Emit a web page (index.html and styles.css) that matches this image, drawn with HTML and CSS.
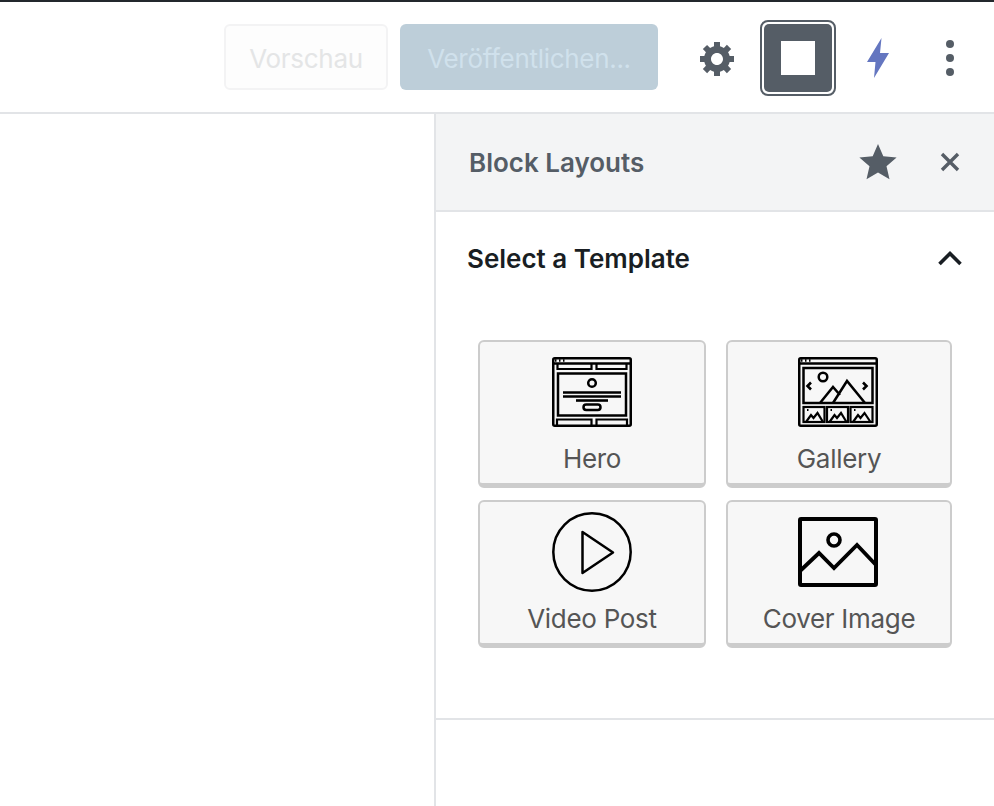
FILE: index.html
```html
<!DOCTYPE html>
<html lang="de">
<head>
<meta charset="utf-8">
<title>Block Layouts</title>
<link rel="stylesheet" href="styles.css">
</head>
<body>
<div class="app">
  <header class="topbar">
    <button class="btn btn-preview">Vorschau</button>
    <button class="btn btn-publish">Veröffentlichen...</button>
    <span class="tool tool-gear">
      <svg width="40" height="40" viewBox="0 0 20 20"><path fill="#555d66" d="M18 12h-2.18c-.17.7-.44 1.35-.81 1.93l1.54 1.54-2.1 2.1-1.54-1.54c-.58.36-1.23.63-1.91.79V19H8v-2.18c-.68-.16-1.33-.43-1.91-.79l-1.54 1.54-2.12-2.12 1.54-1.54c-.36-.58-.63-1.23-.79-1.91H1V9.03h2.17c.16-.7.44-1.35.8-1.94L2.43 5.55l2.1-2.1 1.54 1.54c.58-.37 1.24-.64 1.93-.81V2h3v2.18c.68.16 1.33.43 1.91.79l1.54-1.54 2.12 2.12-1.54 1.54c.36.59.64 1.24.8 1.94H18V12zm-8.5 1.5c1.66 0 3-1.34 3-3s-1.34-3-3-3-3 1.34-3 3 1.34 3 3 3z"/></svg>
    </span>
    <span class="tool-active"><span class="tool-active-inner"><span class="square"></span></span></span>
    <span class="tool tool-bolt">
      <svg width="24" height="42" viewBox="0 0 24 42"><path fill="#6476c0" d="M15.500 1 1 25h8.500L8 41 23 16h-9z"/></svg>
    </span>
    <span class="tool tool-dots">
      <svg width="8" height="36" viewBox="0 0 8 36"><circle cx="4" cy="4" r="4" fill="#555d66"/><circle cx="4" cy="18" r="4" fill="#555d66"/><circle cx="4" cy="32" r="4" fill="#555d66"/></svg>
    </span>
  </header>
  <div class="body">
    <main class="canvas"></main>
    <aside class="sidebar">
      <div class="panel-head">
        <h2 class="panel-title">Block Layouts</h2>
        <svg class="star" width="38" height="38" viewBox="0 0 38 38"><path fill="#555d66" d="M19 1l5.300 12.300 13.300 1.200-10.100 8.800 3 13L19 29.400 7.500 36.300l3-13L.4 14.500l13.300-1.200z"/></svg>
        <svg class="close" width="22" height="22" viewBox="0 0 22 22"><path fill="none" stroke="#555d66" stroke-width="3.400" d="M3 3l16 16M19 3L3 19"/></svg>
      </div>
      <section class="section">
        <div class="section-head">
          <h3 class="section-title">Select a Template</h3>
          <svg width="26" height="16" viewBox="0 0 26 16"><path fill="none" stroke="#191e23" stroke-width="3.600" d="M2.500 14 13 3.500 23.500 14"/></svg>
        </div>
        <div class="grid">
          <button class="card">
            <svg class="card-icon" width="80" height="70" viewBox="0 0 80 70" fill="none" stroke="#000" stroke-width="2.500">
              <rect x="1.250" y="1.250" width="77.500" height="67.500" rx="1.500" stroke-width="2.500"/>
              <path d="M1 6.500h78" />
              <path d="M5.500 6v6h34V6M44.500 6v6h30V6" stroke-width="2.200"/>
              <path d="M5 61.500V70M5 62.500h34.500V69M44.500 69v-6.500H75V69" stroke-width="2.200"/>
              <rect x="6" y="16.500" width="68" height="42"/>
              <circle cx="40" cy="26" r="3.800"/>
              <path d="M11 35.500h58M11 39.500h58"/>
              <path d="M24 43.500h32" stroke-width="2.600"/>
              <rect x="31.500" y="47.500" width="17" height="5.500" rx="2.700"/>
              <path d="M3 3.500h1.500M7 3.500h1.500M11 3.500h1.500" stroke-width="2.400"/>
            </svg>
            <span class="card-label">Hero</span>
          </button>
          <button class="card">
            <svg class="card-icon" width="80" height="70" viewBox="0 0 80 70" fill="none" stroke="#000" stroke-width="2.500">
              <rect x="1.250" y="1.250" width="77.500" height="67.500" rx="1.500"/>
              <path d="M1 6.500h78"/>
              <path d="M3 3.500h1.500M7 3.500h1.500M11 3.500h1.500" stroke-width="2.400"/>
              <rect x="5.500" y="11" width="69" height="35"/>
              <circle cx="25" cy="20" r="4.300"/>
              <path d="M13 25.500 9.500 29l3.500 3.500M65 25.500l3.500 3.500L65 32.500" stroke-width="2.600"/>
              <path d="M22 46 35 30l7 8M35 46l14-22 18 22"/>
              <rect x="5.500" y="50" width="21" height="15" stroke-width="2.200"/>
              <rect x="29" y="50" width="21" height="15" stroke-width="2.200"/>
              <rect x="52.500" y="50" width="22" height="15" stroke-width="2.200"/>
              <path d="M8 65l5-7 2.500 3 4-5 5.500 9M31.500 65l5-7 2.500 3 4-5 5.500 9M55 65l5-7 2.500 3 4-5 6 9" stroke-width="2.200"/>
              <path d="M9 53h1.500M32.500 53H34M56 53h1.500" stroke-width="2"/>
            </svg>
            <span class="card-label">Gallery</span>
          </button>
          <button class="card">
            <svg class="card-icon" width="80" height="80" viewBox="0 0 80 80" fill="none" stroke="#000" stroke-width="2.500">
              <circle cx="40" cy="40" r="38.700"/>
              <path stroke-linejoin="round" d="M30.500 20v41L61 40.500z"/>
            </svg>
            <span class="card-label">Video Post</span>
          </button>
          <button class="card">
            <svg class="card-icon" width="80" height="70" viewBox="0 0 80 70" fill="none" stroke="#000" stroke-width="3.800">
              <rect x="2" y="2" width="76" height="66" rx="1" stroke-width="4"/>
              <circle cx="36" cy="23" r="6" stroke-width="3.600"/>
              <path d="M2 54l19-18 15 15 23-23 19 20"/>
            </svg>
            <span class="card-label">Cover Image</span>
          </button>
        </div>
      </section>
    </aside>
  </div>
</div>
</body>
</html>
```

FILE: styles.css
```css
* { box-sizing: border-box; }
html, body { margin: 0; height: 100%; overflow: hidden; background: #fff; }
body { font-family: Inter, "Liberation Sans", sans-serif; color: #555d66; }
.app { height: 100vh; display: flex; flex-direction: column; }
.topbar {
  height: 114px;
  flex: none;
  border-top: 2px solid #23282d;
  border-bottom: 2px solid #e2e4e7;
  display: flex;
  align-items: center;
  padding-right: 40px;
}
.btn {
  height: 66px;
  font: 400 26px Inter, sans-serif;
  letter-spacing: -0.3px;
  border-radius: 6px;
  padding: 2px 0 0;
  flex: none;
}
.btn-preview {
  margin-left: 224px;
  width: 164px;
  background: #fdfdfd;
  border: 2px solid #f3f3f4;
  color: #e4e5e6;
}
.btn-publish {
  margin-left: 12px;
  width: 258px;
  background: #bdced9;
  border: 0;
  color: #d0e1ec;
}
.tool { display: flex; align-items: center; justify-content: center; margin-top: 2px; flex: none; }
.tool-gear { margin-left: 40px; width: 40px; }
.tool-active {
  margin-left: 22px;
  margin-top: 2px;
  width: 76px;
  height: 76px;
  flex: none;
  border: 2px solid #555d66;
  border-radius: 8px;
  padding: 2px;
  background: #fff;
}
.tool-active-inner {
  display: flex;
  align-items: center;
  justify-content: center;
  width: 100%;
  height: 100%;
  background: #555d66;
  border-radius: 5px;
}
.square { width: 34px; height: 34px; background: #fff; }
.tool-bolt { margin-left: 30px; width: 24px; }
.tool-dots { margin-left: 56px; width: 8px; }
.body { flex: 1; display: flex; min-height: 0; }
.canvas { flex: 1; }
.sidebar { width: 560px; flex: none; border-left: 2px solid #e2e4e7; }
.panel-head {
  height: 98px;
  background: #f3f4f5;
  border-bottom: 2px solid #e2e4e7;
  display: flex;
  align-items: center;
  padding-left: 33px;
}
.panel-title { margin: 0; flex: 1; font: 600 26px Inter, sans-serif; color: #555d66; }
.star { margin-right: 42px; }
.close { margin-right: 33px; }
.section { height: 508px; border-bottom: 2px solid #e2e4e7; }
.section-head {
  height: 92px;
  display: flex;
  align-items: center;
  justify-content: space-between;
  padding: 0 31px;
}
.section-title { margin: 0; font: 600 26px Inter, sans-serif; color: #191e23; }
.grid {
  display: grid;
  grid-template-columns: 228px 226px;
  grid-auto-rows: 148px;
  gap: 12px 20px;
  padding: 36px 0 0 42px;
}
.card {
  background: #f7f7f7;
  border: 2px solid #ccc;
  border-bottom-width: 5px;
  border-radius: 6px;
  padding: 0;
  display: flex;
  flex-direction: column;
  align-items: center;
  font: 400 26px Inter, sans-serif;
  letter-spacing: -0.3px;
  color: #555;
}
.card:nth-child(even) .card-icon { margin-left: -2px; }
.card-icon { display: block; margin-top: 15px; flex: none; }
.card-label { line-height: 32px; margin-top: 16px; }
.card:nth-child(3) .card-icon { margin-top: 10px; }
.card:nth-child(3) .card-label { margin-top: 11px; }
```
